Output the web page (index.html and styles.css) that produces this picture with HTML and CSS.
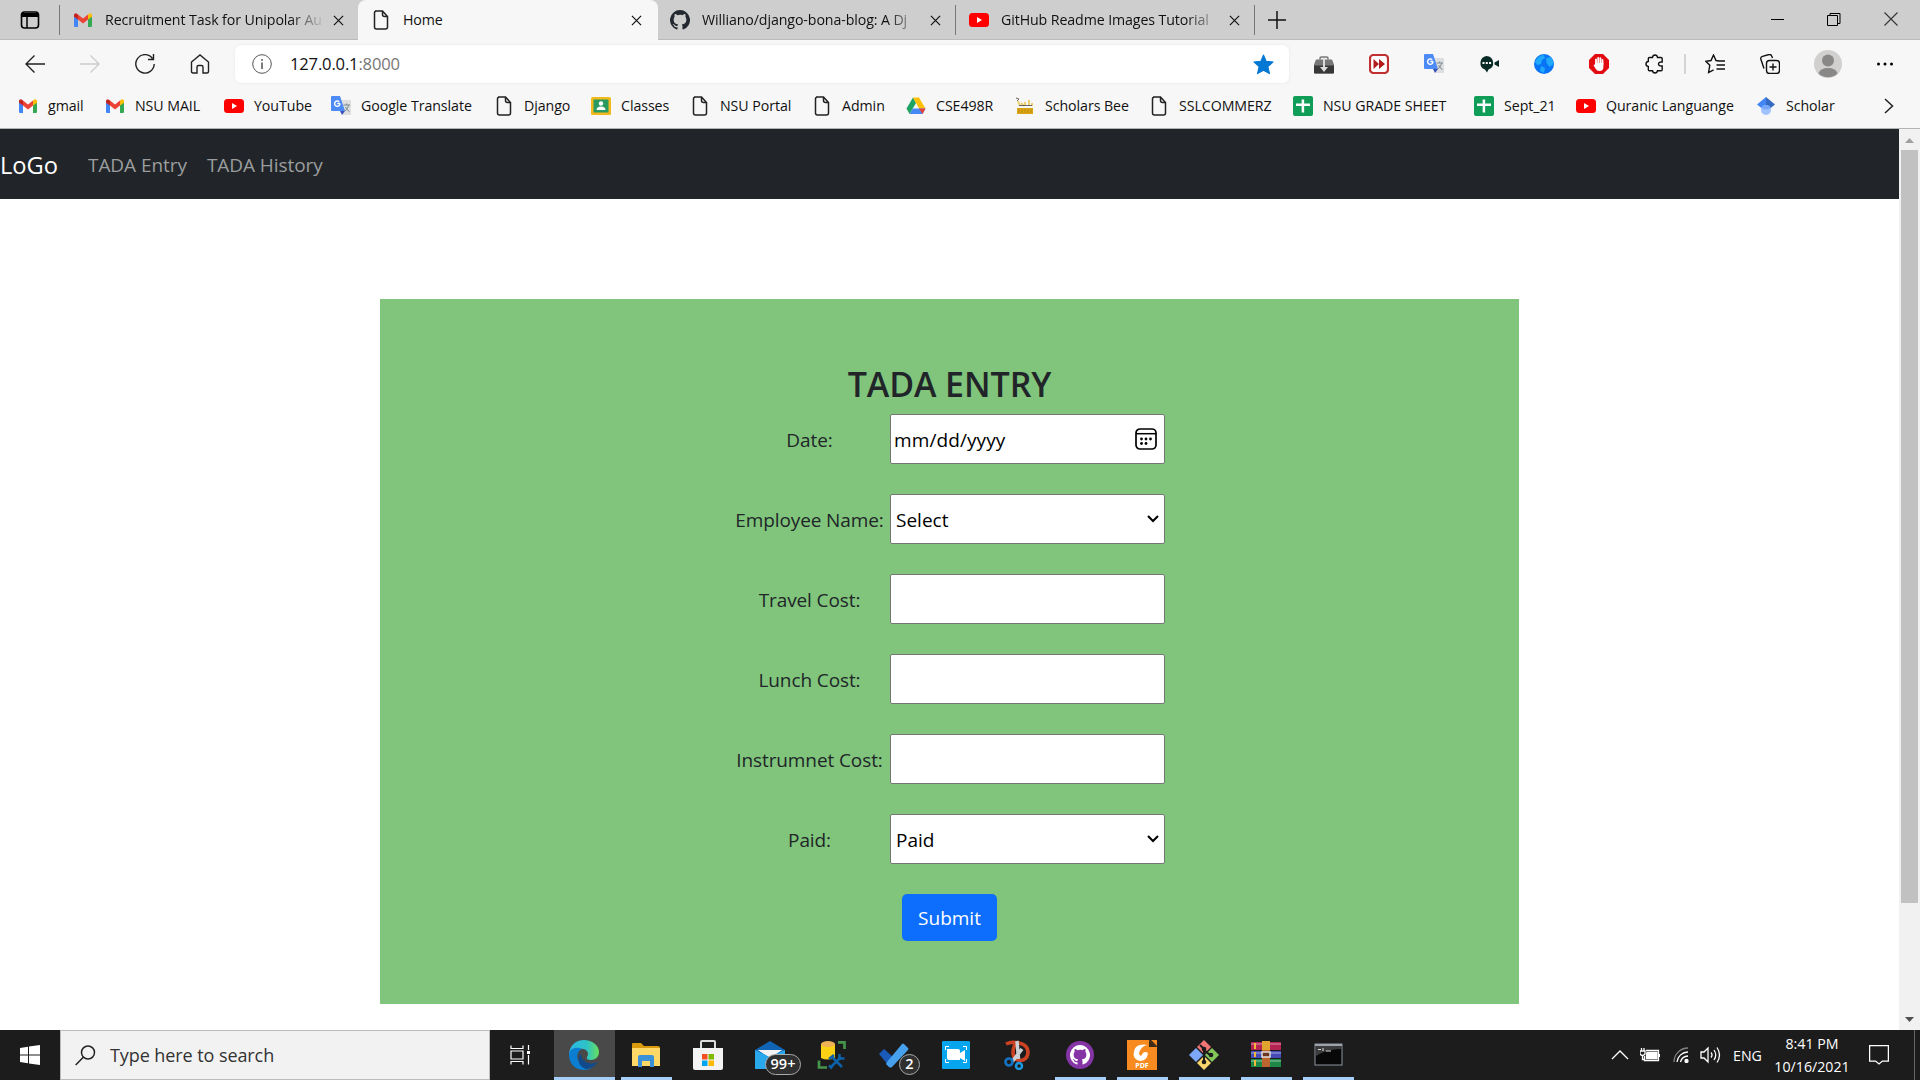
FILE: index.html
```html
<!DOCTYPE html>
<html lang="en">
<head>
<meta charset="utf-8">
<title>Home</title>
<link rel="stylesheet" href="styles.css">
</head>
<body>
<svg class="defs" aria-hidden="true">
  <symbol id="gmail" viewBox="0 0 20 20"><path fill="#4285f4" d="M1 6l4 3v8H2.200Q1 17 1 16z"/><path fill="#34a853" d="M19 6l-4 3v8h2.800Q19 17 19 16z"/><path fill="#ea4335" d="M5 4.500l5 4 5-4V9.500l-5 4-5-4z"/><path fill="#c5221f" d="M1 5Q1 3.200 3 3.200L5 4.500v5L1 6.700z"/><path fill="#fbbc04" d="M19 5Q19 3.200 17 3.200L15 4.500v5l4-2.800z"/></symbol>
  <symbol id="youtube" viewBox="0 0 20 20"><rect y="3" width="20" height="14" rx="3.500" fill="#f00"/><path d="M8 7l5 3-5 3z" fill="#fff"/></symbol>
  <symbol id="file" viewBox="0 0 20 20"><path d="M4 1h7.500l5 5.500V17q0 2-2 2h-9q-2 0-2-2V3q0-2 2-2zM11.500 1v3.500q0 2 2 2h3" fill="none" stroke="#222" stroke-width="1.500"/></symbol>
  <symbol id="translate" viewBox="0 0 20 20"><path fill="#dedede" d="M9 4h10q1 0 1 1v13q0 1-1 1h-7z"/><path fill="#4c8bf5" d="M1 0h8l5 15H1q-1 0-1-1V1q0-1 1-1z"/><path fill="#3750b8" d="M9 15h5l-3 4z"/><path d="M9 7.500H6.300M8.200 5.700A2.700 2.700 0 1 0 9 7.500" fill="none" stroke="#fff" stroke-width="1.400"/><path d="M12.500 9H19M15.700 7.500V9M17.800 9q-1 4-4 6M14.500 11q1 3 4 4.500" fill="none" stroke="#7b8b95"/></symbol>
  <symbol id="sheet" viewBox="0 0 20 20"><rect width="20" height="20" rx="2" fill="#0f9d58"/><path d="M9.900 3.500v13M3 8.800h14" stroke="#fff" stroke-width="2.500"/></symbol>
  <symbol id="close" viewBox="0 0 12 12"><path d="M1 1l10 10M11 1L1 11" stroke="#111" stroke-width="1.300"/></symbol>
  <symbol id="cat" viewBox="0 0 16 16"><path fill-rule="evenodd" d="M8 0a8 8 0 0 0-2.530 15.590c.4.070.55-.17.550-.38v-1.490c-2.230.48-2.700-.95-2.700-.95-.36-.92-.89-1.170-.89-1.170-.73-.5.060-.49.060-.49.800.06 1.230.83 1.230.83.710 1.220 1.870.87 2.330.66.070-.52.280-.87.510-1.070-1.780-.2-3.640-.89-3.640-3.950 0-.87.310-1.590.82-2.150-.08-.2-.36-1.020.08-2.120 0 0 .67-.21 2.200.82A7.600 7.600 0 0 1 8 3.860c.68 0 1.360.09 2 .27 1.530-1.040 2.200-.82 2.200-.82.440 1.100.16 1.920.08 2.120.51.560.82 1.270.82 2.150 0 3.070-1.870 3.750-3.650 3.950.29.250.54.730.54 1.480v2.200c0 .21.150.46.550.38A8 8 0 0 0 8 0z"/></symbol>
</svg>

<header class="tabstrip">
  <div class="tabstrip-menu"><svg width="20" height="20" viewBox="0 0 20 20"><rect x="1.500" y="2" width="17" height="16" rx="3" fill="none" stroke="#000" stroke-width="1.600"/><path d="M2 3h16v4H2z"/><path d="M7 6v12" stroke="#000" stroke-width="1.500"/></svg></div>
  <div class="tab tab-mail"><svg class="ico"><use href="#gmail"/></svg><span class="tab-title">Recruitment Task for Unipolar Au</span><svg class="x"><use href="#close"/></svg></div>
  <div class="tab tab-active"><svg class="ico"><use href="#file"/></svg><span class="tab-title">Home</span><svg class="x"><use href="#close"/></svg></div>
  <div class="tab tab-github"><svg class="ico cat"><use href="#cat"/></svg><span class="tab-title">Williano/django-bona-blog: A Dj</span><svg class="x"><use href="#close"/></svg></div>
  <div class="tab tab-video"><svg class="ico"><use href="#youtube"/></svg><span class="tab-title">GitHub Readme Images Tutorial</span><svg class="x"><use href="#close"/></svg></div>
  <svg class="newtab" width="18" height="18" viewBox="0 0 18 18"><path d="M9 0v18M0 9h18" stroke="#111" stroke-width="1.500"/></svg>
  <div class="window-buttons">
    <svg viewBox="0 0 14 14"><path d="M0 7.500h13" stroke="#000"/></svg>
    <svg viewBox="0 0 14 14" fill="none" stroke="#000"><path d="M.5 3.500h10v10H.5zM3 3.500V1.500h10v10h-2.500"/></svg>
    <svg viewBox="0 0 14 14"><path d="M.5.500l13 13M13.500.500l-13 13" stroke="#333" stroke-width="1.100"/></svg>
  </div>
</header>

<div class="toolbar">
  <div class="nav-buttons">
    <svg viewBox="0 0 20 20"><path d="M20 10H1M9.500 1.500L1 10l8.500 8.500"/></svg>
    <svg class="disabled" viewBox="0 0 20 20"><path d="M0 10h19M10.500 1.500L19 10l-8.500 8.500"/></svg>
    <svg viewBox="0 0 20 20"><path d="M17.500 4.500A9.200 9.200 0 1 0 19.200 10M18.500 0v5.500H13"/></svg>
    <svg viewBox="0 0 20 20"><path d="M1.500 8L10 1l8.500 7v9.500q0 1.500-1.500 1.500h-4v-6q0-1.500-1.500-1.500h-3Q7 11.500 7 13v6H3q-1.500 0-1.500-1.500z"/></svg>
  </div>
  <div class="address">
    <svg width="20" height="20" viewBox="0 0 20 20"><circle cx="10" cy="10" r="9.300" fill="none" stroke="#555"/><path d="M10 8.500V15M10 5v1.700" stroke="#444" stroke-width="1.400"/></svg>
    <span class="url">127.0.0.1<span class="port">:8000</span></span>
    <svg width="21" height="21" viewBox="0 0 20 20"><path fill="#0078d4" stroke="#0078d4" stroke-linejoin="round" d="M10 1l2.600 6 6.600.6-5 4.400 1.500 6.700L10 15.500l-5.700 3.200 1.500-6.700-5-4.400L7.400 7z"/></svg>
  </div>
  <div class="extensions">
    <svg viewBox="0 0 20 20"><path d="M6 5.500V4.500q0-1.500 1.500-1.500h5q1.500 0 1.500 1.500v1" fill="none" stroke="#777" stroke-width="1.600"/><path d="M2 5.500h16l2 5v8q0 1-1 1H1q-1 0-1-1v-8z" fill="#777"/><path d="M0 11.500h20v7q0 1-1 1H1q-1 0-1-1z" fill="#383838"/><path d="M9 4h2v9h3l-4 5-4-5h3z" fill="#ddd"/></svg>
    <svg viewBox="0 0 20 20"><rect x="1" y="1" width="18" height="18" rx="3.500" fill="#fff" stroke="#c03030" stroke-width="2.200"/><path d="M4.500 5l5.500 5-5.500 5zM10 5l6 5-6 5z" fill="#b11d1d"/></svg>
    <svg><use href="#translate"/></svg>
    <svg viewBox="0 0 20 20" fill="#082c25"><path d="M7.500 2a7.300 7 0 0 1 2 13.500L8 18.500 6 15.500A7 7 0 0 1 7.500 2zM15.500 9q0-1 1-1L20 6v7l-3.500-2q-1 0-1-1z"/><path d="M3.500 9h2M6.800 9h2M10.100 9h2" stroke="#fff" stroke-width="1.800"/></svg>
    <svg viewBox="0 0 20 20"><circle cx="10" cy="10" r="10" fill="#0874f5"/><path d="M1 8q3-7 9-7l1 3-3 2-1 4-4 1zM12 4l5-1q3 4 2.500 7l-4 3-3-4zM7 12l4 2-1 5-4-2z" fill="#20a9fb"/></svg>
    <svg viewBox="0 0 20 20"><path d="M6 0h8l6 6v8l-6 6H6l-6-6V6z" fill="#e10b10"/><path d="M7 11V5.500M9.200 9V3.800M11.400 9V4.200M13.500 10V6" stroke="#fff" stroke-width="1.800" stroke-linecap="round"/><path d="M6.100 9h8.300v4q0 4-4 4-2.500 0-4-2.500L4.500 11q1-1.200 1.900 0z" fill="#fff"/></svg>
    <svg class="line" viewBox="0 0 20 20"><path d="M4.500 3.500H7.500Q7.800 1 10 1t2.500 2.500h3.500q1.200 0 1.200 1.200V8q-3.700-.3-3.700 2t3.700 2v3.500q0 1.200-1.200 1.200h-3.500Q12.200 19 10 19t-2.500-2.300h-3q-1.200 0-1.200-1.200V12.500Q1 12.200 1 10t2.300-2.500V4.700q0-1.200 1.200-1.200z"/></svg>
    <i class="divider"></i>
    <svg class="line" viewBox="0 0 20 20"><path d="M14 7l-3-.5L8.500 1 6 6.500.8 7.300l4 4L3.600 18.500l5-2.700M12.500 7H20M11.500 11H20M11.500 15H20"/></svg>
    <svg class="line" viewBox="0 0 20 20"><rect x="6.500" y="6.500" width="13" height="13" rx="3"/><path d="M13 9.500v7M9.500 13h7M4 14.500L.8 5Q.4 3 2.500 2.300L9 .5q2-.4 2.700 1.500l.8 2"/></svg>
    <svg class="avatar" viewBox="0 0 28 28"><circle cx="14" cy="14" r="14" fill="#d2d0ce"/><circle cx="14" cy="10.500" r="6" fill="#8a8886"/><path d="M4.500 23.500q1.500-5.500 9.500-5.500t9.500 5.500a14 14 0 0 1-19 0z" fill="#8a8886"/></svg>
    <svg viewBox="0 0 20 20"><circle cx="3.500" cy="10" r="1.500"/><circle cx="10" cy="10" r="1.500"/><circle cx="16.500" cy="10" r="1.500"/></svg>
  </div>
</div>

<nav class="bookmarks">
  <a><svg><use href="#gmail"/></svg><span>gmail</span></a>
  <a><svg><use href="#gmail"/></svg><span>NSU MAIL</span></a>
  <a><svg><use href="#youtube"/></svg><span>YouTube</span></a>
  <a><svg><use href="#translate"/></svg><span>Google Translate</span></a>
  <a><svg><use href="#file"/></svg><span>Django</span></a>
  <a><svg viewBox="0 0 20 20"><rect y="1" width="20" height="18" rx="1.500" fill="#f4b91c"/><path d="M2.500 3.500h15v13h-15z" fill="#299b60"/><circle cx="10" cy="7.500" r="2.200" fill="#fff"/><path d="M5.500 14q0-3.500 4.500-3.500t4.500 3.500z" fill="#fff"/></svg><span>Classes</span></a>
  <a><svg><use href="#file"/></svg><span>NSU Portal</span></a>
  <a><svg><use href="#file"/></svg><span>Admin</span></a>
  <a><svg viewBox="0 0 20 20"><path d="M7 1.500L.5 12.500l3 5.500L10 7z" fill="#1da462"/><path d="M7 1.500h6l6.500 11H13z" fill="#ffc107"/><path d="M3.500 18l3.200-5.500h12.800L16.500 18z" fill="#4688f4"/><path d="M13 12.500h6.500L16.500 18z" fill="#ea4335"/></svg><span>CSE498R</span></a>
  <a><svg viewBox="0 0 20 20"><path d="M2 12h16v6H2z" fill="#dba514"/><path d="M3 5l2 5M6 7l3 3M10 6v4M14 4v6M17 7v3" stroke="#ecd06f" stroke-width="2"/><path d="M1 2l3 1-2 2M4 9.500h13" stroke="#666" fill="none"/><path d="M3 14h14M3 16h14" stroke="#b98b16" stroke-dasharray="2 1"/></svg><span>Scholars Bee</span></a>
  <a><svg><use href="#file"/></svg><span>SSLCOMMERZ</span></a>
  <a><svg><use href="#sheet"/></svg><span>NSU GRADE SHEET</span></a>
  <a><svg><use href="#sheet"/></svg><span>Sept_21</span></a>
  <a><svg><use href="#youtube"/></svg><span>Quranic Languange</span></a>
  <a><svg viewBox="0 0 20 20"><path d="M10 1L1 8.500l5 4 4-3z" fill="#4285f4"/><path d="M10 1l9 7.500-5 4-4-3z" fill="#356ac3"/><circle cx="10" cy="14" r="5" fill="#a0c3ff"/><path d="M5.400 12a5 5 0 0 1 9.200 0q-4.600 3-9.200 0z" fill="#76a7fa"/></svg><span>Scholar</span></a>
  <svg class="more" viewBox="0 0 10 16"><path d="M1 1l7.500 7L1 15" fill="none" stroke="#222" stroke-width="1.500"/></svg>
</nav>

<div class="viewport">
  <main class="page">
    <nav class="navbar"><a class="brand">LoGo</a><a class="nav-link">TADA Entry</a><a class="nav-link">TADA History</a></nav>
    <section class="panel">
      <h2>TADA ENTRY</h2>
      <form>
        <div class="row"><label>Date:</label><div class="field date"><span>mm/dd/yyyy</span><svg width="22" height="22" viewBox="0 0 22 22"><rect x="1" y="1" width="20" height="20" rx="4" fill="none" stroke="#000" stroke-width="1.700"/><path d="M1 5.700h20" stroke="#000" stroke-width="1.500"/><g><circle cx="6.500" cy="11" r="1.400"/><circle cx="11" cy="11" r="1.400"/><circle cx="15.500" cy="11" r="1.400"/><circle cx="6.500" cy="15.500" r="1.400"/><circle cx="11" cy="15.500" r="1.400"/></g></svg></div></div>
        <div class="row"><label>Employee Name:</label><div class="field select"><span>Select</span><svg width="12" height="8" viewBox="0 0 12 8"><path d="M1 1l5 5 5-5"/></svg></div></div>
        <div class="row"><label>Travel Cost:</label><div class="field"></div></div>
        <div class="row"><label>Lunch Cost:</label><div class="field"></div></div>
        <div class="row"><label>Instrumnet Cost:</label><div class="field"></div></div>
        <div class="row"><label>Paid:</label><div class="field select"><span>Paid</span><svg width="12" height="8" viewBox="0 0 12 8"><path d="M1 1l5 5 5-5"/></svg></div></div>
        <button type="button" class="submit">Submit</button>
      </form>
    </section>
  </main>
  <aside class="scrollbar">
    <svg viewBox="0 0 21 21"><path d="M6 14l4.500-5 4.500 5z" fill="#a0a0a0"/></svg>
    <div class="thumb"></div>
    <svg viewBox="0 0 21 21"><path d="M6 8l4.500 5L15 8z" fill="#505050"/></svg>
  </aside>
</div>

<footer class="taskbar">
  <div class="start"><svg width="20" height="20" viewBox="0 0 20 20" fill="#fff"><path d="M0 3l8-1.200v7.700H0zM9 1.600L20 0v9.500H9zM0 10.500h8v7.700L0 17zM9 10.500h11V20L9 18.400z"/></svg></div>
  <div class="search"><svg width="21" height="21" viewBox="0 0 21 21" fill="none" stroke="#222" stroke-width="1.500"><circle cx="13" cy="7.500" r="6.500"/><path d="M8.500 12L.7 20"/></svg><span>Type here to search</span></div>
  <div class="taskview"><svg width="21" height="20" viewBox="0 0 21 20" fill="none" stroke="#fff" stroke-width="1.200"><path d="M1 .5v3h12v-3M1 19.500v-3h12v3M1 6h12v8H1zM18.500 0v5M18.500 10v9.500"/><path d="M17 6h3v3h-3z" fill="#fff" stroke="none"/></svg></div>
  <div class="apps">
    <div class="app current"><svg viewBox="0 0 30 30"><defs><linearGradient id="eg" x2="1"><stop stop-color="#2bb8e8"/><stop offset=".6" stop-color="#2dc3c5"/><stop offset="1" stop-color="#69df5b"/></linearGradient></defs><path d="M0 14C1 5 7 0 15 0c8 0 15 5 15 12 0 5-4 8-8 8-3 0-5-1-4-3 3-4-1-9-7-8Q3 10 0 16z" fill="url(#eg)"/><path d="M0 15C0 8 8 6 13 9c-5 2-6 8-3 13 3 6 9 7 14 5-10 7-24 1-24-12z" fill="#0b7ed2"/><path d="M12 13c-5 6-2 14 5 16 6-.5 9-3 12-7-9 4-17-1-17-9z" fill="#114a8b"/></svg></div>
    <div class="app open"><svg viewBox="0 0 30 30"><path d="M1 4q0-1 1-1h8l3 3h14q2 0 2 2v17H1z" fill="#d99b0b"/><path d="M1 8h28v18H1z" fill="#ffd868"/><path d="M7 17q0-2 2-2h12q2 0 2 2v10h-4v-6h-8v6H7z" fill="#3b91d8"/></svg></div>
    <div class="app"><svg viewBox="0 0 30 30"><path d="M8 10V2q0-1 1-1h12q1 0 1 1v8" fill="none" stroke="#ddd" stroke-width="2"/><path d="M0 8h30v20q0 2-2 2H2q-2 0-2-2z" fill="#f3f3f3"/><path fill="#f25022" d="M9 14h5.500v5.500H9z"/><path fill="#7fba00" d="M15.500 14H21v5.500h-5.500z"/><path fill="#00a4ef" d="M9 20.500h5.500V26H9z"/><path fill="#ffb900" d="M15.500 20.500H21V26h-5.500z"/></svg></div>
    <div class="app"><svg viewBox="0 0 30 30"><path d="M0 10L15 1l15 9v18q0 1-1 1H0z" fill="#1164b4"/><path d="M3 10h24L15 18z" fill="#fff"/><path d="M0 10l15 7 15-7v18q0 1-1 1H1q-1 0-1-1z" fill="#29a8eb"/><path d="M3 10h24l-12 7z" fill="#f3f3f3"/></svg><b class="badge wide">99+</b></div>
    <div class="app"><svg viewBox="0 0 30 30"><path d="M4 4v14q6 3 14 0V4z" fill="#fbd116"/><ellipse cx="11" cy="4" rx="7" ry="3" fill="#efb256"/><path d="M21 2.300h6.500V9M2 20.500v7h8" fill="none" stroke="#45954a" stroke-width="2.700"/><path d="M14 27l10-10M15 17l10 10" stroke="#0c61a8" stroke-width="2.500"/><path d="M12 19l5-4M22.500 14v4.500h5M12 25.500l3 3" fill="none" stroke="#0c61a8" stroke-width="2.500"/></svg></div>
    <div class="app"><svg viewBox="0 0 30 30"><path d="M0 14l5-5 10 9-5 8z" fill="#195abb"/><path d="M8 22L23 4q1-1 2 0l4 4q1 1 0 2L13 27q-1.500 1-3 0l-3-3z" fill="#46a0ec"/></svg><b class="badge">2</b></div>
    <div class="app"><svg viewBox="0 0 30 30"><rect x="1" y="1" width="28" height="28" rx="1" fill="#08a5ef"/><path d="M6 9h11q2 0 2 2v9H8q-2 0-2-2zM19 13l5-3v11l-5-3z" fill="#fff"/><path d="M4.500 10V6.500H8M22 6.500h3.500V10M4.500 19v3.500H8M22 22.500h3.500V19" fill="none" stroke="#fff"/></svg></div>
    <div class="app"><svg viewBox="0 0 30 30" fill="none"><path d="M3 4q6-3 13-1 9 2 9 9 0 6-5 8Q11 22 10 13q0-7 4-10" stroke="#ce4224" stroke-width="3.600"/><path d="M14 1l1.500 18M19 9L9 22" stroke="#cbd0d5" stroke-width="3.500"/><circle cx="6" cy="22" r="3.500" stroke="#1572c0" stroke-width="2.700"/><circle cx="16" cy="26" r="3" stroke="#1c98df" stroke-width="2.500"/></svg></div>
    <div class="app open"><svg viewBox="0 0 30 30"><circle cx="15" cy="15" r="14" fill="#8534a5"/><svg x="5" y="5" width="20" height="20" viewBox="0 0 16 16" fill="#fff"><use href="#cat"/></svg></svg></div>
    <div class="app open"><svg viewBox="0 0 30 30"><path d="M0 0h22l8 7v23H0z" fill="#f78b1f"/><path d="M22 0v7h8z" fill="#3d2a16"/><path d="M24 0h6v6z" fill="#f78b1f"/><path d="M21 5Q9 3 7 11t6 10q7 0 8-8-3-2-5 0l-2 3q-4-2 0-7 3-4 7-4z" fill="#fff"/><text x="15" y="28" text-anchor="middle" class="pdf">PDF</text></svg></div>
    <div class="app open"><svg viewBox="0 0 30 30"><path d="M15 0l7 7-7 7-7-7z" fill="#f27675"/><path d="M7 8l7 7-7 7-7-7z" fill="#7da7f7"/><path d="M23 8l7 7-7 7-7-7z" fill="#83c65a"/><path d="M15 16l7 7-7 7-7-7z" fill="#f8d66c"/><path d="M11 5l4 4v12M15 10l6 5" stroke="#1c1c1c" stroke-width="2" fill="none"/><circle cx="15" cy="22" r="2.300" fill="#1c1c1c"/><circle cx="22" cy="15" r="2.300" fill="#1c1c1c"/><circle cx="15" cy="9" r="2.300" fill="#1c1c1c"/></svg></div>
    <div class="app open"><svg viewBox="0 0 30 30"><path d="M0 2h30v8H0z" fill="#b42352"/><path d="M0 11h30v7H0z" fill="#464cb3"/><path d="M0 19h30v8H0z" fill="#1c8848"/><path d="M0 4h30M0 13h30M0 21h30" stroke="#fff" stroke-opacity=".35" stroke-width="1.500"/><path d="M4 3v6M4 12v5M4 20v6" stroke="#f3b53a" stroke-width="2"/><path d="M11 1h8v26h-8z" fill="#bd6530"/><path d="M11 1h8v9h-8z" fill="#dfa52f"/><path d="M11 12h8v5h-8z" fill="#6c3621" stroke="#ddd" stroke-width="1.500"/></svg></div>
    <div class="app open"><svg viewBox="0 0 30 30"><rect x="2" y="4" width="27" height="21" fill="#080808" stroke="#8d949c"/><path d="M2 4h27v2H2z" fill="#9ca3aa"/><path d="M3 6h25v3q-14 0-25 7z" fill="#3c3c3c"/><path d="M5 9.500h3M10 8v3M13 11h5" stroke="#ddd"/></svg></div>
  </div>
  <div class="tray">
    <svg class="caret" width="18" height="10" viewBox="0 0 18 10"><path d="M1 9l8-8 8 8"/></svg>
    <svg class="battery" width="20" height="14" viewBox="0 0 20 14"><path d="M6 2.500h12.500v10h-14V8M19.500 6v3M0 3h5v3q-2.500 3-5 0zM1.500 0v3M4 0v3M2.500 7v4.500h2"/><path d="M7 4.500h10v6H6.500V7z" fill="#fff"/></svg>
    <svg class="wifi" width="16" height="16" viewBox="0 0 16 16"><path d="M1 15A14 14 0 0 1 15 1" opacity=".45"/><path d="M4 15A11 11 0 0 1 15 5M7.500 15A8 8 0 0 1 15 9"/><circle cx="13.500" cy="14" r="1.500" fill="#fff"/></svg>
    <svg class="volume" width="21" height="18" viewBox="0 0 21 18"><path d="M1 6h3l4-4v14l-4-4H1zM11 6.500q2 2.500 0 5M14 4q3.500 5 0 10M17 1.500q5 7.500 0 15"/></svg>
    <span class="lang">ENG</span>
    <div class="clock"><span>8:41 PM</span><span>10/16/2021</span></div>
    <svg class="notice" width="20" height="20" viewBox="0 0 20 20"><path d="M.6.600h18.800v15.500h-6L10 19l-3.400-2.900h-6z"/></svg>
  </div>
</footer>
</body>
</html>
```
FILE: styles.css
```css
* { box-sizing: border-box; }
body { margin: 0; width: 1920px; height: 1080px; overflow: hidden; display: flex; flex-direction: column; background: #fff; font-family: "Open Sans", sans-serif; color: #111; }
svg { display: block; flex: none; }
.defs { display: none; }

/* Browser tabs */
.tabstrip { height: 40px; flex: none; display: flex; align-items: center; background: #cecece; box-shadow: inset 0 -1px #bcbcbc; }
.tabstrip-menu { width: 60px; height: 30px; padding-left: 20px; display: flex; align-items: center; border-right: 1px solid #777; }
.tab { height: 40px; display: flex; align-items: center; font-size: 14.2px; letter-spacing: -.1px; }
.ico { width: 20px; height: 20px; margin-right: 12px; }
.cat { fill: #24292f; }
.tab-title { flex: 1; min-width: 0; padding-bottom: 1px; white-space: nowrap; }
.x { width: 11px; height: 11px; }
.tab-mail { width: 298px; padding: 0 14px 0 13px; }
.tab-mail .tab-title, .tab-github .tab-title, .tab-video .tab-title { margin-right: 8px; -webkit-mask-image: linear-gradient(to right, #000 84%, transparent); mask-image: linear-gradient(to right, #000 84%, transparent); }
.tab-active { width: 300px; padding: 0 16px 0 13px; background: #f7f7f7; border-radius: 8px 8px 0 0; }
.tab-github { width: 297px; padding: 0 14px 0 12px; }
.tab-video { width: 300px; height: 30px; padding: 0 14px 0 13px; border: solid #777; border-width: 0 1px; }
.newtab { margin-left: 13px; }
.window-buttons { margin-left: auto; width: 162px; display: flex; justify-content: space-between; padding: 0 22px 2px 13px; }
.window-buttons svg { width: 14px; height: 14px; }
.window-buttons svg:nth-child(2) { margin-right: 2px; }

/* Address row */
.toolbar { height: 48px; flex: none; display: flex; align-items: center; background: #f7f7f7; }
.nav-buttons { width: 235px; padding: 0 25px; display: flex; justify-content: space-between; }
.nav-buttons svg { width: 20px; height: 20px; fill: none; stroke: #222; stroke-width: 1.4; }
.nav-buttons .disabled { stroke: #ccc; }
.address { width: 1054px; height: 38px; display: flex; align-items: center; background: #fff; border-radius: 6px; padding: 0 15px 0 17px; box-shadow: 0 0 3px #e4e4e4; }
.url { flex: 1; margin-left: 18px; padding-bottom: 2px; font-size: 16.6px; letter-spacing: -.18px; }
.port { color: #777; }
.extensions { width: 631px; padding: 0 25px; display: grid; grid-template-columns: 55px 55px 55px 55px 55px 56px 34px 26px 55px 54px 61px 20px; align-items: center; }
.extensions svg { width: 20px; height: 20px; }
.extensions .avatar { width: 28px; height: 28px; }
.line { fill: none; stroke: #111; stroke-width: 1.4; }
.divider { width: 2px; height: 20px; background: #d4d4d4; margin-left: 5px; }

/* Favourites */
.bookmarks { height: 41px; flex: none; padding: 0 0 4px 18px; display: grid; grid-template-columns: 87px 119px 107px 163px 97px 99px 122px 94px 109px 134px 144px 181px 102px 180px 128px auto; align-items: center; background: #f7f7f7; border-bottom: 1px solid #b4b4b4; font-size: 14.2px; white-space: nowrap; letter-spacing: -.06px; }
.bookmarks a { display: flex; align-items: center; gap: 10px; }
.bookmarks a span { padding-bottom: 2px; }
.bookmarks a svg { width: 20px; height: 20px; }
.bookmarks .more { width: 10px; height: 16px; }

/* Web page */
.viewport { height: 901px; flex: none; display: flex; }
.page { flex: 1; }
.navbar { height: 70px; display: flex; align-items: center; background: #212529; color: #9b9d9e; font-size: 19px; letter-spacing: -.06px; padding-top: 2px; }
.brand { width: 88px; color: #fff; font-size: 23.7px; }
.nav-link { margin-right: 20px; }
.panel { width: 1139px; height: 705px; margin: 100px auto 0; padding-top: 63px; background: #80c57b; display: flex; flex-direction: column; align-items: center; color: #212529; }
h2 { margin: 0 0 8px; font-size: 34px; line-height: 44px; font-weight: 600; letter-spacing: -.1px; }
form { width: 431px; display: flex; flex-direction: column; align-items: center; gap: 30px; font-size: 19px; }
.row { width: 100%; height: 50px; display: grid; grid-template-columns: 156px 275px; align-items: center; }
label { text-align: center; padding: 2px 5px 0 0; white-space: nowrap; letter-spacing: -.1px; }
.field { height: 50px; display: flex; align-items: center; justify-content: space-between; border: 1px solid #767676; border-radius: 2px; background: #fff; color: #000; padding: 0 5px; }
.field span { padding-top: 2px; }
.date { padding: 0 7px 0 3px; }
.date span { letter-spacing: .1px; }
.select svg { fill: none; stroke: #000; stroke-width: 2; }
.submit { width: 95px; height: 47px; border: 0; border-radius: 5px; background: #0d6efd; color: #fff; font: 19px "Open Sans", sans-serif; padding: 0; }
.scrollbar { width: 21px; display: flex; flex-direction: column; background: #f1f1f1; }
.scrollbar svg { width: 21px; height: 21px; }
.thumb { height: 753px; margin: 0 2px auto; background: #c1c1c1; }

/* Desktop taskbar */
.taskbar { height: 50px; flex: none; display: flex; align-items: center; background: #1c1c1c; color: #fff; }
.start { width: 60px; padding-left: 20px; }
.search { width: 430px; height: 50px; display: flex; align-items: center; gap: 14px; padding-left: 14px; background: #f2f2f2; border: 1px solid #bbb; color: #333; font-size: 18px; letter-spacing: -.08px; }
.taskview { width: 64px; padding-left: 20px; }
.apps { display: grid; grid-template-columns: repeat(13, 62px); }
.app { position: relative; height: 50px; display: grid; place-items: center; padding-right: 2px; }
.app > svg { width: 30px; height: 30px; }
.app.current { width: 61px; background: #494949; border-bottom: 3px solid #a5cff8; padding-top: 3px; }
.app.open::after { content: ""; position: absolute; bottom: 0; left: 5px; right: 6px; height: 3px; background: #a5cff8; }
.badge { position: absolute; left: 35px; top: 24px; width: 21px; height: 21px; border: 1px solid #aaa; border-radius: 11px; background: #303030; font: 600 14.500px/18px "Open Sans", sans-serif; text-align: center; }
.badge.wide { left: 25px; width: 36px; }
.pdf { font: 700 7px "Open Sans", sans-serif; fill: #fff; }
.tray { flex: 1; height: 50px; display: flex; align-items: center; padding-left: 251px; margin-right: 5px; border-right: 1px solid #666; }
.tray svg { fill: none; stroke: #fff; stroke-width: 1.3; }
.battery { margin-left: 11px; }
.wifi { margin-left: 13px; }
.volume { margin-left: 11px; }
.lang { width: 28px; margin-left: 12px; font-size: 14.2px; }
.clock { width: 78px; margin-left: 12px; display: flex; flex-direction: column; text-align: center; font-size: 14.2px; line-height: 23px; white-space: nowrap; }
.clock { padding-bottom: 1px; }
.notice { margin-left: 18px; }
```
